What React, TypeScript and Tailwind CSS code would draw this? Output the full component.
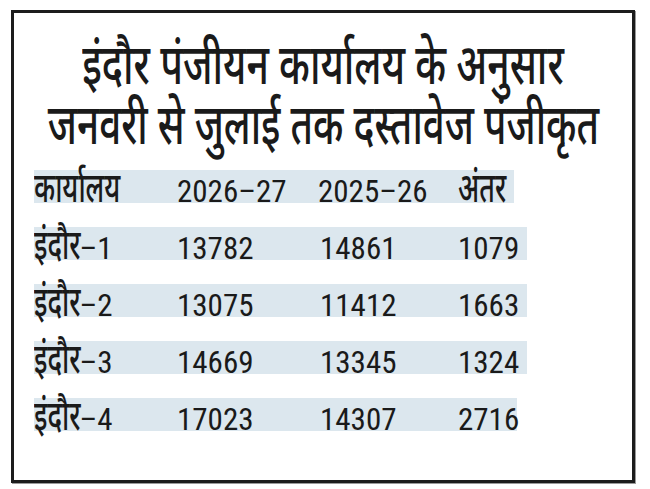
type Row = {
  office: string
  num: string
  a: string
  b: string
  diff: string
  width: string
}

const rows: Row[] = [
  { office: 'इंदौर', num: '1', a: '13782', b: '14861', diff: '1079', width: 'w-[493px]' },
  { office: 'इंदौर', num: '2', a: '13075', b: '11412', diff: '1663', width: 'w-[493px]' },
  { office: 'इंदौर', num: '3', a: '14669', b: '13345', diff: '1324', width: 'w-[493px]' },
  { office: 'इंदौर', num: '4', a: '17023', b: '14307', diff: '2716', width: 'w-[483px]' },
]

// condensed devanagari for the table cells
function Hindi({ children }: { children: string }) {
  return (
    <span className="inline-block origin-left scale-x-[0.64] whitespace-nowrap font-['Noto_Sans_Devanagari',sans-serif] text-[42px] leading-[0] font-medium">
      {children}
    </span>
  )
}

export default function App() {
  return (
    <main className="h-[489px] w-[650px] bg-white pl-[11px] pt-[10px] text-[#1a1a1a] font-['Roboto',sans-serif]">
      <div className="h-[473px] w-[624px] overflow-hidden border-[3px] border-[#1c1c1c] shadow-[1px_1px_0_#9a9a9a]">
        <div className="flex flex-col items-center pt-[28px] font-['Noto_Sans_Devanagari',sans-serif] text-[56px] leading-[60px] font-medium">
          <p className="scale-x-[0.7] whitespace-nowrap">इंदौर पंजीयन कार्यालय के अनुसार</p>
          <p className="scale-x-[0.69] whitespace-nowrap">जनवरी से जुलाई तक दस्तावेज पंजीकृत</p>
        </div>

        <div className="mt-[9px] flex flex-col gap-[24px] pl-[20px] text-[31px] leading-[43px] font-stretch-[75%]">
          <div className="flex h-[33px] w-[480px] items-baseline bg-[#dce7ee]">
            <div className="w-[143px] shrink-0"><Hindi>कार्यालय</Hindi></div>
            <div className="w-[141px] shrink-0">2026–27</div>
            <div className="w-[140px] shrink-0">2025–26</div>
            <div className="shrink-0"><Hindi>अंतर</Hindi></div>
          </div>

          {rows.map((row) => (
            <div key={row.num} className={`flex h-[33px] items-baseline bg-[#dce7ee] ${row.width}`}>
              <div className="w-[143px] shrink-0 whitespace-nowrap">
                <Hindi>{row.office}</Hindi>
                <span className="-ml-[27px]">–{row.num}</span>
              </div>
              <div className="w-[141px] shrink-0">{row.a}</div>
              <div className="w-[140px] shrink-0 pl-[2px]">{row.b}</div>
              <div className="w-[61px] shrink-0 text-right">{row.diff}</div>
            </div>
          ))}
        </div>
      </div>
    </main>
  )
}
